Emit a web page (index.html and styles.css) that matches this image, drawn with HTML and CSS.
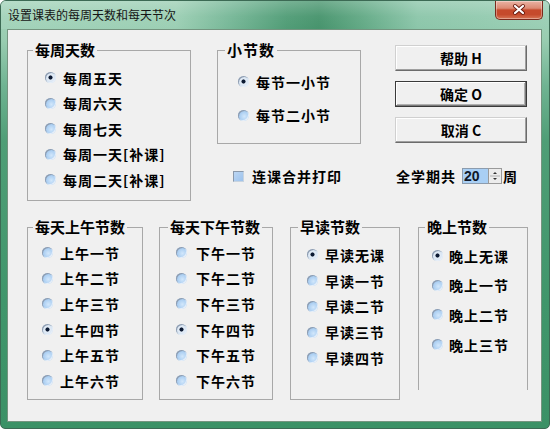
FILE: index.html
```html
<!DOCTYPE html>
<html lang="zh-CN">
<head>
<meta charset="utf-8">
<title>设置课表的每周天数和每天节次</title>
<link rel="stylesheet" href="styles.css">
</head>
<body>
<div class="window">
  <div class="titlebar">
    <span class="title">设置课表的每周天数和每天节次</span>
    <span class="close">
      <svg width="48" height="19" viewBox="0 0 48 19">
        <path d="M20 6 L28 13 M28 6 L20 13" stroke="#6a1c10" stroke-width="4" stroke-linecap="round"/>
        <path d="M20 6 L28 13 M28 6 L20 13" stroke="#ffffff" stroke-width="2.2" stroke-linecap="round"/>
      </svg>
    </span>
  </div>
  <div class="client">
    <div class="top">
      <fieldset class="group g-week">
        <legend>每周天数</legend>
        <div class="opts">
          <div class="opt"><span class="radio on"></span>每周五天</div>
          <div class="opt"><span class="radio"></span>每周六天</div>
          <div class="opt"><span class="radio"></span>每周七天</div>
          <div class="opt"><span class="radio"></span>每周一天[补课]</div>
          <div class="opt"><span class="radio"></span>每周二天[补课]</div>
        </div>
      </fieldset>
      <div class="right">
        <div class="right-top">
          <fieldset class="group g-lesson">
            <legend>小节数</legend>
            <div class="opts">
              <div class="opt"><span class="radio on"></span>每节一小节</div>
              <div class="opt"><span class="radio"></span>每节二小节</div>
            </div>
          </fieldset>
          <div class="buttons">
            <div class="btn">帮助 H</div>
            <div class="btn default">确定 O</div>
            <div class="btn">取消 C</div>
          </div>
        </div>
        <div class="right-bottom">
          <div class="check"><span class="box"></span>连课合并打印</div>
          <div class="weeks">
            <span class="weeks-label">全学期共</span>
            <span class="spin-val">20</span>
            <span class="spin-btns">
              <svg width="12" height="14" viewBox="0 0 12 14">
                <path d="M4 5 L6 3 L8 5 Z" fill="#333"/>
                <path d="M1 7 H11" stroke="#b0b0b0" stroke-width="1"/>
                <path d="M4 9 L6 11 L8 9 Z" fill="#333"/>
              </svg>
            </span>
            <span class="wk">周</span>
          </div>
        </div>
      </div>
    </div>
    <div class="bottom">
      <fieldset class="group g-am">
        <legend>每天上午节数</legend>
        <div class="opts">
          <div class="opt"><span class="radio"></span>上午一节</div>
          <div class="opt"><span class="radio"></span>上午二节</div>
          <div class="opt"><span class="radio"></span>上午三节</div>
          <div class="opt"><span class="radio on"></span>上午四节</div>
          <div class="opt"><span class="radio"></span>上午五节</div>
          <div class="opt"><span class="radio"></span>上午六节</div>
        </div>
      </fieldset>
      <fieldset class="group g-pm">
        <legend>每天下午节数</legend>
        <div class="opts">
          <div class="opt"><span class="radio"></span>下午一节</div>
          <div class="opt"><span class="radio"></span>下午二节</div>
          <div class="opt"><span class="radio"></span>下午三节</div>
          <div class="opt"><span class="radio on"></span>下午四节</div>
          <div class="opt"><span class="radio"></span>下午五节</div>
          <div class="opt"><span class="radio"></span>下午六节</div>
        </div>
      </fieldset>
      <fieldset class="group g-morn">
        <legend>早读节数</legend>
        <div class="opts">
          <div class="opt"><span class="radio on"></span>早读无课</div>
          <div class="opt"><span class="radio"></span>早读一节</div>
          <div class="opt"><span class="radio"></span>早读二节</div>
          <div class="opt"><span class="radio"></span>早读三节</div>
          <div class="opt"><span class="radio"></span>早读四节</div>
        </div>
      </fieldset>
      <fieldset class="group g-eve">
        <legend>晚上节数</legend>
        <div class="opts">
          <div class="opt"><span class="radio on"></span>晚上无课</div>
          <div class="opt"><span class="radio"></span>晚上一节</div>
          <div class="opt"><span class="radio"></span>晚上二节</div>
          <div class="opt"><span class="radio"></span>晚上三节</div>
        </div>
      </fieldset>
    </div>
  </div>
</div>
</body>
</html>
```
FILE: styles.css
```css
* { box-sizing: border-box; }
html, body { margin: 0; padding: 0; }
body {
  width: 550px;
  height: 429px;
  overflow: hidden;
  background: #ffffff;
  font-family: "Noto Sans CJK SC", "Noto Sans", sans-serif;
  color: #000;
}
.window {
  width: 550px;
  height: 429px;
  display: flex;
  flex-direction: column;
  border: 1px solid #3c6a54;
  border-radius: 6px 6px 5px 5px;
  overflow: hidden;
  background: linear-gradient(180deg, #a6d5bc 0px, #98ccb0 40px, #6fb392 85px, #4f9e76 140px, #40966b 300px, #3b9166 100%);
}
.titlebar {
  height: 28px;
  flex: none;
  display: flex;
  justify-content: space-between;
  align-items: flex-start;
  padding: 0 6px 0 7px;
  background:
    linear-gradient(180deg, rgba(255,255,255,0.22) 0%, rgba(255,255,255,0.04) 55%, rgba(255,255,255,0) 100%),
    linear-gradient(90deg, #a3d3ba 0%, #9ccfb4 32%, #76b797 42%, #519d77 52%, #47946d 58%, #63aa86 66%, #8cc6aa 76%, #9bcfb5 100%);
}
.title {
  margin-top: 6px;
  font-size: 12px;
  line-height: 16px;
  color: #151515;
}
.close {
  width: 48px;
  height: 19px;
  display: block;
  border: 1px solid #7a2a1c;
  border-top: none;
  border-radius: 0 0 5px 5px;
  background: linear-gradient(180deg, #eab3a4 0%, #dc8a73 40%, #c64a2c 50%, #c54a2c 75%, #d77556 100%);
  box-shadow: inset 0 0 0 1px rgba(255,255,255,0.35);
  overflow: hidden;
}
.close svg { display: block; margin: -1px 0 0 -1px; }
.client {
  flex: 1;
  margin: 0 7px 6px 6px;
  border: 1px solid #74947f;
  background: #f0f0f0;
  padding: 12px 0 0 19px;
}
.top { display: flex; align-items: flex-start; }
.right { margin-left: 26px; display: flex; flex-direction: column; }
.right-top { display: flex; align-items: flex-start; }
.buttons {
  margin-left: 34px;
  margin-top: 3px;
  display: flex;
  flex-direction: column;
  gap: 10px;
}
.btn {
  width: 132px;
  height: 26px;
  display: flex;
  align-items: center;
  justify-content: center;
  font-size: 14px;
  font-weight: 700;
  line-height: 16px;
  background: #f0f0f0;
  border: 1px solid;
  border-color: #d0d0d0 #6b6b6b #6b6b6b #d0d0d0;
  box-shadow: inset -1px -1px 0 #a0a0a0, inset 1px 1px 0 #ffffff;
}
.btn.default {
  border: 1px solid #3a3a3a;
  box-shadow: inset -1px -1px 0 #7a7a7a, inset 1px 1px 0 #ffffff, inset -2px -2px 0 #b0b0b0;
}
.right-bottom {
  margin-top: 24px;
  height: 16px;
  display: flex;
  align-items: center;
}
.check {
  width: 178px;
  padding-left: 16px;
  display: flex;
  align-items: center;
  font-size: 14px;
  font-weight: 700;
  letter-spacing: 1px;
  line-height: 16px;
}
.box {
  width: 11px;
  height: 11px;
  flex: none;
  margin-right: 8px;
  background: linear-gradient(135deg, #bcd6f3, #9cc2ec);
  border: 1px solid #8a98aa;
  border-right-color: #c8d4e0;
  border-bottom-color: #c8d4e0;
}
.weeks { display: flex; align-items: center; height: 16px; }
.weeks-label {
  padding-left: 1px;
  margin-right: 6px;
  font-size: 14px;
  font-weight: 700;
  letter-spacing: 1px;
  line-height: 16px;
}
.spin-val {
  width: 26px;
  height: 16px;
  padding-left: 1px;
  background: #a9cff4;
  border: 1px solid #8c9cae;
  border-right: none;
  font-family: "Liberation Sans", Arial, sans-serif;
  font-weight: 700;
  font-size: 14px;
  line-height: 14px;
  color: #101828;
}
.spin-btns {
  width: 14px;
  height: 16px;
  display: block;
  background: #ececec;
  border: 1px solid #9a9a9a;
}
.spin-btns svg { display: block; }
.wk {
  margin-left: 1px;
  font-size: 14px;
  font-weight: 700;
  line-height: 16px;
}
.bottom {
  margin-top: 18px;
  display: flex;
  align-items: flex-start;
}
fieldset.group {
  margin: 0;
  padding: 0;
  min-width: 0;
  border: 1px solid #a8a8a8;
}
fieldset.group legend {
  padding: 0 2px;
  font-size: 15px;
  font-weight: 700;
  line-height: 16px;
  color: #000;
}
.opts { display: flex; flex-direction: column; }
.opt {
  display: flex;
  align-items: center;
  font-size: 14px;
  font-weight: 700;
  letter-spacing: 1px;
  line-height: 16px;
  white-space: nowrap;
}
.radio {
  width: 11px;
  height: 11px;
  flex: none;
  margin-right: 7px;
  border-radius: 50%;
  background: radial-gradient(circle at 58% 58%, #d2e7fb 0%, #a9cdf1 55%, #8fb6e0 100%);
  box-shadow: inset 1px 1px 0 #8f9db0, inset -1px -1px 0 #e6eef8;
}
.radio.on {
  background: radial-gradient(circle, #0c1a33 0, #0c1a33 1.7px, #e4edf7 2.4px, #c3d6ea 100%);
}
fieldset.g-week { width: 164px; height: 159px; }
fieldset.g-week legend { margin-left: 5px; }
.g-week .opts { padding: 7px 0 0 17px; }
.g-week .opt { height: 25.5px; }
fieldset.g-lesson { width: 144px; height: 102px; }
fieldset.g-lesson legend { margin-left: 7px; letter-spacing: 1px; }
.g-lesson .opts { padding: 7px 0 0 20px; }
.g-lesson .opt { height: 33.5px; }
fieldset.g-am { width: 116px; height: 181px; }
fieldset.g-am legend { margin-left: 5px; }
.g-am .opts { padding: 5px 0 0 14px; }
.g-am .opt { height: 25.6px; }
fieldset.g-pm { width: 114px; height: 181px; margin-left: 16px; }
fieldset.g-pm legend { margin-left: 8px; }
.g-pm .opts { padding: 5px 0 0 16px; }
.g-pm .opt { height: 25.6px; }
.g-pm .radio { margin-right: 9px; }
fieldset.g-morn { width: 110px; height: 181px; margin-left: 17px; }
fieldset.g-morn legend { margin-left: 7px; }
.g-morn .opts { padding: 7px 0 0 16px; }
.g-morn .opt { height: 25.75px; }
fieldset.g-eve { width: 110px; height: 171px; margin-left: 18px; border-bottom: none; }
fieldset.g-eve legend { margin-left: 6px; }
.g-eve .opts { padding: 6px 0 0 13px; }
.g-eve .opt { height: 29.6px; }
.g-eve .radio { margin-right: 6px; }
```
